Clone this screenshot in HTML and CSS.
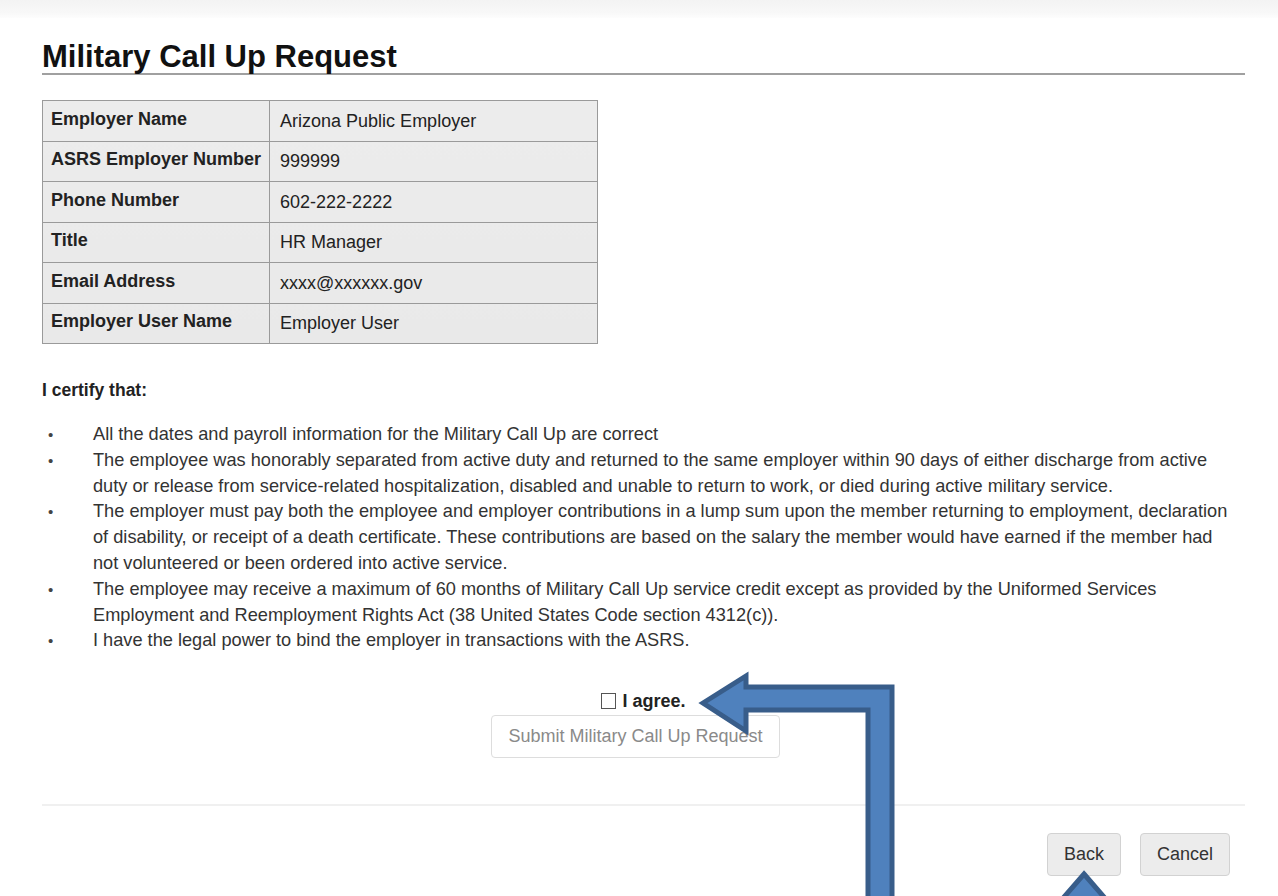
FILE: index.html
```html
<!DOCTYPE html>
<html lang="en">
<head>
<meta charset="utf-8">
<title>Military Call Up Request</title>
<link rel="stylesheet" href="styles.css">
</head>
<body>
<div class="topbar"></div>
<main class="page">
  <h1 class="page-title">Military Call Up Request</h1>

  <table class="info-table">
    <tr><th>Employer Name</th><td>Arizona Public Employer</td></tr>
    <tr><th>ASRS Employer Number</th><td>999999</td></tr>
    <tr><th>Phone Number</th><td>602-222-2222</td></tr>
    <tr><th>Title</th><td>HR Manager</td></tr>
    <tr><th>Email Address</th><td>xxxx@xxxxxx.gov</td></tr>
    <tr><th>Employer User Name</th><td>Employer User</td></tr>
  </table>

  <p class="certify-heading">I certify that:</p>
  <ul class="certify-list">
    <li>All the dates and payroll information for the Military Call Up are correct</li>
    <li>The employee was honorably separated from active duty and returned to the same employer within 90 days of either discharge from active duty or release from service-related hospitalization, disabled and unable to return to work, or died during active military service.</li>
    <li>The employer must pay both the employee and employer contributions in a lump sum upon the member returning to employment, declaration of disability, or receipt of a death certificate. These contributions are based on the salary the member would have earned if the member had not volunteered or been ordered into active service.</li>
    <li>The employee may receive a maximum of 60 months of Military Call Up service credit except as provided by the Uniformed Services Employment and Reemployment Rights Act (38 United States Code section 4312(c)).</li>
    <li>I have the legal power to bind the employer in transactions with the ASRS.</li>
  </ul>

  <div class="agree">
    <label class="agree-label"><span class="check-box"></span>I agree.</label>
    <button class="btn btn-submit" disabled>Submit Military Call Up Request</button>
  </div>

  <hr class="divider">

  <div class="actions">
    <button class="btn btn-default">Back</button>
    <button class="btn btn-default">Cancel</button>
  </div>
</main>

<svg class="callouts" width="1278" height="896" viewBox="0 0 1278 896" aria-hidden="true">
  <polygon points="703,703 746,676 746,687 892,687 892,905 868,905 868,710 746,710 746,731"
           fill="#4f81bd" stroke="#385d8a" stroke-width="5" stroke-linejoin="miter"/>
  <polygon points="1084,874 1136,934 1032,934"
           fill="#4f81bd" stroke="#385d8a" stroke-width="5" stroke-linejoin="miter"/>
</svg>
</body>
</html>
```

FILE: styles.css
```css
html, body {
  margin: 0;
  padding: 0;
  background: #fff;
}

body {
  position: relative;
  width: 1278px;
  height: 896px;
  overflow: hidden;
  font-family: "Liberation Sans", Arial, sans-serif;
  color: #333;
}

.topbar {
  height: 18px;
  background: linear-gradient(#f3f3f3, #f8f8f8 70%, #fdfdfd);
}

.page {
  padding: 0 33px 0 42px;
  border-left: 6px solid #f6f6f6;
  margin-left: -6px;
}

.page-title {
  margin: 22px 0 0;
  font-size: 31px;
  line-height: 33px;
  font-weight: bold;
  color: #111;
  border-bottom: 2px solid #a0a0a0;
}

.info-table {
  margin-top: 25px;
  border-collapse: collapse;
  background: linear-gradient(#ececec, #e9e9e9);
  border: 1px solid #8c8c8c;
  font-size: 18px;
  color: #222;
}

.info-table tr {
  height: 40.5px;
}

.info-table th,
.info-table td {
  padding: 0 8px 0 8px;
  border: 1px solid #9a9a9a;
  text-align: left;
  white-space: nowrap;
  box-sizing: border-box;
}

.info-table th {
  width: 227px;
  font-weight: bold;
  vertical-align: middle;
  padding-bottom: 3px;
}

.info-table td {
  width: 328px;
  padding-left: 10px;
  padding-top: 1px;
}

.certify-heading {
  margin: 36px 0 0;
  font-size: 17.5px;
  line-height: 20px;
  font-weight: bold;
  color: #222;
}

.certify-list {
  margin: 22px 0 0;
  padding: 0 6px 0 6px;
  list-style: none;
  font-size: 18.2px;
  line-height: 25.8px;
  color: #333;
}

.certify-list li {
  display: grid;
  grid-template-columns: 45px 1fr;
}

.certify-list li::before {
  content: "\2022";
  font-size: 15px;
  color: #444;
}

.agree {
  margin-top: 37px;
  display: flex;
  flex-direction: column;
  align-items: center;
}

.agree-label {
  display: flex;
  align-items: center;
  gap: 6px;
  font-size: 18px;
  line-height: 20px;
  font-weight: bold;
  color: #222;
}

.check-box {
  width: 15px;
  height: 16px;
  border: 1px solid #555;
  box-sizing: border-box;
}

.btn {
  font-family: "Liberation Sans", Arial, sans-serif;
  font-size: 18px;
  height: 43px;
  border-radius: 4px;
  padding: 0 16px;
  box-sizing: border-box;
}

.btn-submit {
  margin-top: 4px;
  margin-right: 16px;
  background: #fff;
  border: 1px solid #ddd;
  color: #8a8a8a;
}

.divider {
  margin: 46px 0 0;
  border: 0;
  border-top: 2px solid #f0f0f0;
}

.actions {
  margin-top: 27px;
  padding-right: 15px;
  display: flex;
  justify-content: flex-end;
  gap: 19px;
}

.btn-default {
  background: #ececec;
  border: 1px solid #d2d2d2;
  color: #333;
}

.callouts {
  position: absolute;
  top: 0;
  left: 0;
  pointer-events: none;
}
```
